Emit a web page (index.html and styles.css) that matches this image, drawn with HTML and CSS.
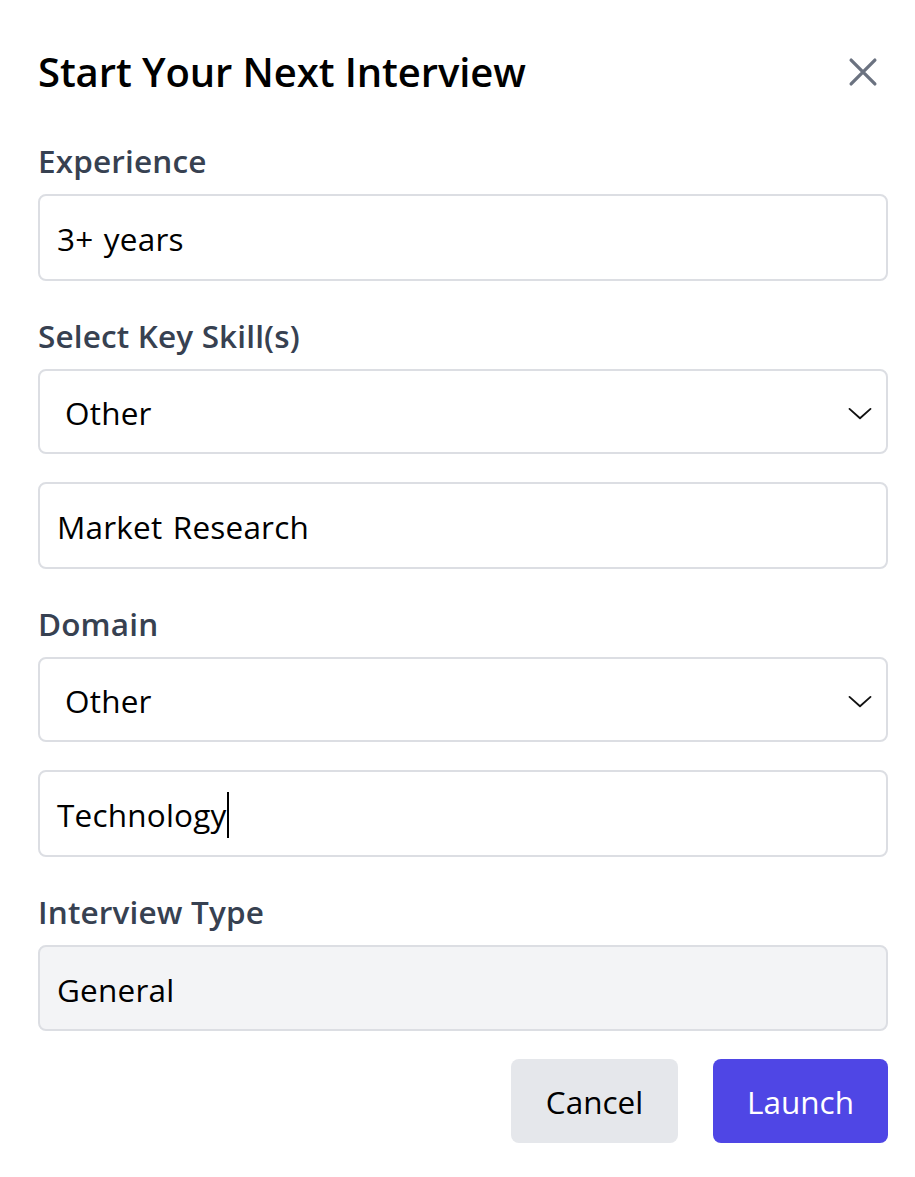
FILE: index.html
```html
<!DOCTYPE html>
<html lang="en">
<head>
<meta charset="utf-8">
<title>Start Your Next Interview</title>
<link rel="stylesheet" href="styles.css">
</head>
<body>
<div class="modal">
  <div class="header">
    <h2 class="title">Start Your Next Interview</h2>
    <button class="close" aria-label="Close">
      <svg width="38" height="38" viewBox="0 0 24 24" fill="none" stroke="#6b7280" stroke-width="2.1" stroke-linecap="round"><path d="M4.5 4.5L19.5 19.5M19.5 4.5L4.5 19.5"/></svg>
    </button>
  </div>
  <div class="fields">
    <div class="field">
      <label class="label">Experience</label>
      <div class="input">3+ years</div>
    </div>
    <div class="field">
      <label class="label">Select Key Skill(s)</label>
      <div class="select"><span>Other</span>
        <svg class="chev" width="28" height="28" viewBox="0 0 24 24" fill="none" stroke="#111" stroke-width="1.6" stroke-linecap="round" stroke-linejoin="round"><path d="M3 8.5l9 8 9-8"/></svg>
      </div>
      <div class="input">Market Research</div>
    </div>
    <div class="field">
      <label class="label">Domain</label>
      <div class="select"><span>Other</span>
        <svg class="chev" width="28" height="28" viewBox="0 0 24 24" fill="none" stroke="#111" stroke-width="1.6" stroke-linecap="round" stroke-linejoin="round"><path d="M3 8.5l9 8 9-8"/></svg>
      </div>
      <div class="input">Technology<span class="caret"></span></div>
    </div>
    <div class="field">
      <label class="label">Interview Type</label>
      <div class="input disabled">General</div>
    </div>
  </div>
  <div class="actions">
    <button class="btn cancel">Cancel</button>
    <button class="btn launch">Launch</button>
  </div>
</div>
</body>
</html>
```
FILE: styles.css
```css
* { box-sizing: border-box; }
body {
  margin: 0;
  background: #fff;
  font-family: "Open Sans", "Noto Sans", sans-serif;
  color: #000;
}
.modal {
  width: 915px;
  padding: 44px 27px 0 38px;
}
.header {
  display: flex;
  justify-content: space-between;
  align-items: center;
  height: 56px;
}
.title {
  margin: 0;
  font-size: 40px;
  font-weight: 600;
  line-height: 56px;
  letter-spacing: -0.1px;
}
.close {
  border: 0;
  background: none;
  padding: 0;
  margin-right: 6px;
  display: flex;
}
.fields {
  margin-top: 40px;
  display: flex;
  flex-direction: column;
  gap: 34px;
}
.field {
  display: flex;
  flex-direction: column;
}
.label {
  font-size: 31.5px;
  font-weight: 600;
  color: #374151;
  line-height: 42px;
  margin-bottom: 12px;
  letter-spacing: 0.15px;
}
.input, .select {
  height: 87px;
  border: 2px solid #dcdee3;
  border-radius: 8px;
  display: flex;
  align-items: center;
  padding: 2px 17px 0;
  font-size: 31.5px;
  letter-spacing: 0.2px;
  word-spacing: 2px;
  color: #000;
}
.select {
  height: 85px;
  padding-left: 25px;
  padding-right: 12px;
  justify-content: space-between;
  margin-bottom: 28px;
}
.disabled {
  background: #f3f4f6;
  height: 86px;
}
.caret {
  display: inline-block;
  width: 2px;
  height: 46px;
  background: #000;
}
.actions {
  margin-top: 28px;
  display: flex;
  justify-content: flex-end;
  gap: 35px;
}
.btn {
  height: 84px;
  border: 0;
  border-radius: 8px;
  font-family: inherit;
  font-size: 31.5px;
}
.cancel {
  width: 167px;
  background: #e5e7eb;
  color: #000;
}
.launch {
  width: 175px;
  background: #4f46e5;
  color: #fff;
}
```
